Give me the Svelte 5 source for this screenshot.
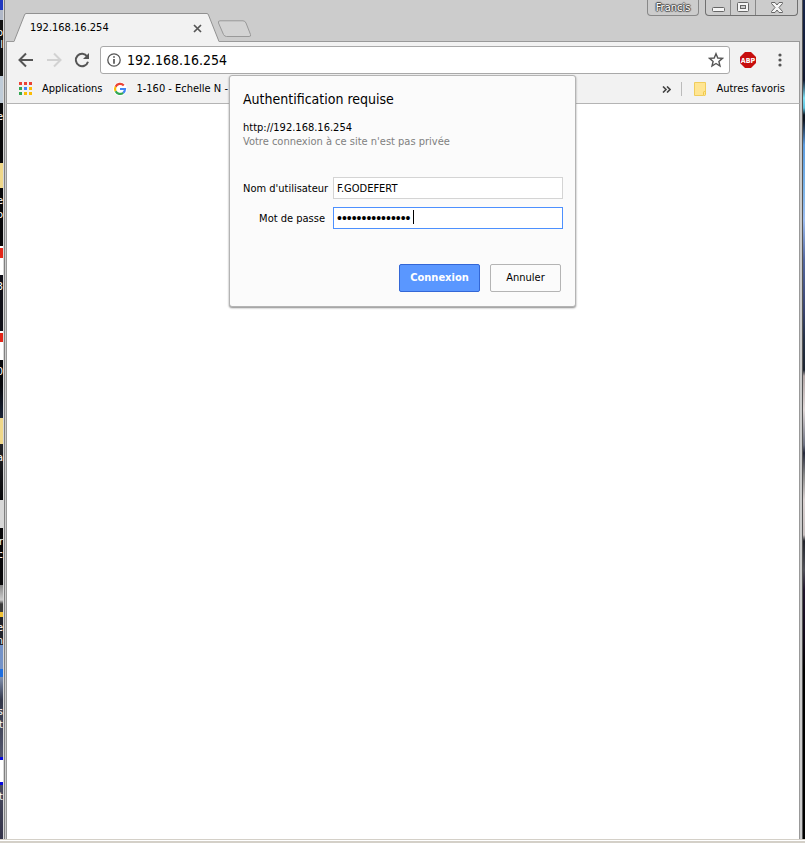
<script lang="ts">
  let username: string = $state('F.GODEFERT');
  let password: string = $state('motdepasse12345');

  const appColors = [
    '#ea4335', '#ea4335', '#ea4335',
    '#34a853', '#4285f4', '#fbbc05',
    '#34a853', '#fbbc05', '#fbbc05'
  ];

  // desktop icon captions that stick out beside the window
  const captions = [
    { text: 'o', top: 26 },
    { text: 'l', top: 38 },
    { text: 'e', top: 110 },
    { text: 'e', top: 194 },
    { text: 'o', top: 208 },
    { text: '3', top: 280 },
    { text: '0', top: 365 },
    { text: 'a', top: 451 },
    { text: 'r', top: 535 },
    { text: 'c', top: 548 },
    { text: 'e', top: 621 },
    { text: 'n', top: 634 },
    { text: 's', top: 705 },
    { text: 't', top: 718 },
    { text: 't', top: 790 }
  ];

  function cancel(): void {
    username = '';
    password = '';
  }
</script>

<div class="screen">
  <div class="desktop">
    <div class="strip left">
      {#each captions as caption}
        <span class="caption" style="top: {caption.top}px">{caption.text}</span>
      {/each}
    </div>

    <div class="window">
      <header class="titlebar">
        <div class="tab">
          <svg class="slope" width="12" height="29" viewBox="0 0 12 29">
            <path d="M0 29V28.5L10.5 2Q11 .5 12 .5V29Z" fill="#f2f2f2" />
            <path d="M0 28.5L10.5 2Q11 .5 12 .5" fill="none" stroke="#919191" />
          </svg>
          <div class="tab-body">
            <span>192.168.16.254</span>
            <button class="icon" aria-label="Fermer l'onglet">
              <svg width="9" height="9" viewBox="0 0 9 9"><path d="M1 1L8 8M8 1L1 8" stroke="#555" stroke-width="1.7" /></svg>
            </button>
          </div>
          <svg class="slope" width="12" height="29" viewBox="0 0 12 29">
            <path d="M12 29V28.5L1.5 2Q1 .5 0 .5V29Z" fill="#f2f2f2" />
            <path d="M12 28.5L1.5 2Q1 .5 0 .5" fill="none" stroke="#919191" />
          </svg>
        </div>
        <button class="icon new-tab" aria-label="Nouvel onglet">
          <svg width="36" height="18" viewBox="0 0 36 18">
            <path d="M3 .8H26Q28 .8 29 3L33.5 14.5Q34.300 16.500 32 16.500H9.500Q7.500 16.500 6.500 14.500L1.500 3Q.8 .8 3 .8Z" fill="#d3d3d3" stroke="#999" />
          </svg>
        </button>
        <button class="profile">Francis</button>
        <div class="controls">
          <button class="minimize" aria-label="Réduire">
            <svg width="13" height="6" viewBox="0 0 13 6"><rect x=".5" y=".5" width="12" height="4" rx="1" fill="#f5f5f5" stroke="#666" /></svg>
          </button>
          <button aria-label="Agrandir">
            <svg width="12" height="10" viewBox="0 0 12 10"><rect x=".5" y=".5" width="11" height="9" rx="1" fill="#f5f5f5" stroke="#666" /><rect x="3.500" y="3.500" width="5" height="3" fill="#ccc" stroke="#666" /></svg>
          </button>
          <button class="close" aria-label="Fermer">
            <svg width="12" height="11" viewBox="0 0 12 11"><path d="M.5 .5H4L6 3L8 .5H11.500V1.500L8 5.500L11.500 9.500V10.500H8L6 8L4 10.500H.5V9.500L4 5.500L.5 1.500Z" fill="#f5f5f5" stroke="#666" /></svg>
          </button>
        </div>
      </header>

      <div class="chrome">
        <nav class="toolbar" aria-label="Navigation">
          <button class="icon" aria-label="Retour">
            <svg width="16" height="16" viewBox="0 0 16 16"><path d="M15 8H2M8 1.500L1.500 8L8 14.500" fill="none" stroke="#555" stroke-width="2" /></svg>
          </button>
          <button class="icon" aria-label="Avancer" disabled>
            <svg width="16" height="16" viewBox="0 0 16 16"><path d="M1 8H14M8 1.500L14.500 8L8 14.500" fill="none" stroke="#d2d2d2" stroke-width="2" /></svg>
          </button>
          <button class="icon" aria-label="Actualiser">
            <svg width="16" height="16" viewBox="0 0 16 16"><path d="M13.200 4.500A6.200 6.200 0 1 0 14 9.700" fill="none" stroke="#555" stroke-width="2" /><path d="M15 1V7H9Z" fill="#555" /></svg>
          </button>
          <div class="address">
            <svg width="14" height="14" viewBox="0 0 14 14"><circle cx="7" cy="7" r="6.200" fill="none" stroke="#555" stroke-width="1.300" /><path d="M7 3.200V4.800M7 6V10.800" stroke="#555" stroke-width="1.700" /></svg>
            <input type="text" aria-label="Adresse" value="192.168.16.254" />
            <button class="icon" aria-label="Ajouter aux favoris">
              <svg width="16" height="16" viewBox="0 0 16 16"><path d="M8 1.700L9.800 6L14.400 6.400L10.900 9.400L12 14L8 11.500L4 14L5.100 9.400L1.600 6.400L6.200 6Z" fill="none" stroke="#555" stroke-width="1.400" /></svg>
            </button>
          </div>
          <button class="icon abp" aria-label="Adblock Plus">
            <svg width="16" height="16" viewBox="0 0 16 16">
              <path d="M5 0H11L16 5V11L11 16H5L0 11V5Z" fill="#c70d0d" />
              <text x="8" y="10.500" text-anchor="middle">ABP</text>
            </svg>
          </button>
          <button class="icon menu" aria-label="Menu">
            <svg width="4" height="14" viewBox="0 0 4 14"><circle cx="2" cy="2" r="1.600" fill="#555" /><circle cx="2" cy="7" r="1.600" fill="#555" /><circle cx="2" cy="12" r="1.600" fill="#555" /></svg>
          </button>
        </nav>

        <nav class="bookmarks" aria-label="Favoris">
          <a href="#apps">
            <svg width="14" height="14" viewBox="0 0 14 14">
              {#each appColors as color, i}
                <rect x={(i % 3) * 5} y={Math.floor(i / 3) * 5} width="3" height="3" fill={color} />
              {/each}
            </svg>
            Applications
          </a>
          <a href="#echelle">
            <svg width="14" height="14" viewBox="0 0 14 14">
              <circle cx="7" cy="7" r="7" fill="#fff" />
              <g fill="none" stroke-width="2.200">
                <path d="M10.800 3.400A5 5 0 0 0 2.600 4.700" stroke="#ea4335" />
                <path d="M2.600 4.700A5 5 0 0 0 2.600 9.300" stroke="#fbbc05" />
                <path d="M2.600 9.300A5 5 0 0 0 10.200 10.800" stroke="#34a853" />
                <path d="M10.200 10.800A5 5 0 0 0 12 7H7" stroke="#4285f4" />
              </g>
            </svg>
            1-160 - Echelle N -
          </a>
          <button class="icon more" aria-label="Autres éléments">
            <svg width="9" height="7" viewBox="0 0 9 7"><path d="M1 .5L4 3.500L1 6.500M5 .5L8 3.500L5 6.500" fill="none" stroke="#444" stroke-width="1.600" /></svg>
          </button>
          <a href="#autres" class="others">
            <svg width="13" height="14" viewBox="0 0 13 14"><path d="M.5 .5H11.500V10.500H9.500V13.500H.5Z" fill="#ffe592" stroke="#f0cd5c" /><rect x="9.500" y="9.500" width="2" height="4" rx="1" fill="#ffe592" stroke="#efc846" /></svg>
            Autres favoris
          </a>
        </nav>
      </div>

      <main class="page"></main>

      <div class="overlay">
        <form class="dialog" onsubmit={(e) => e.preventDefault()}>
          <h1>Authentification requise</h1>
          <p>http://192.168.16.254</p>
          <p class="warning">Votre connexion à ce site n'est pas privée</p>
          <div class="fields">
            <label for="username">Nom d'utilisateur</label>
            <input id="username" type="text" bind:value={username} />
            <label for="password">Mot de passe</label>
            <div class="password">
              <input id="password" type="password" bind:value={password} />
              <i class="caret"></i>
            </div>
          </div>
          <div class="actions">
            <button class="primary" type="submit">Connexion</button>
            <button type="button" onclick={cancel}>Annuler</button>
          </div>
        </form>
      </div>
    </div>

    <div class="strip right"></div>
  </div>
  <div class="taskbar"></div>
</div>

<style>
  :global(body) {
    margin: 0;
  }
  .screen {
    display: flex;
    flex-direction: column;
    min-height: 100vh;
    font-family: 'DejaVu Sans Condensed', 'Noto Sans', Tahoma, sans-serif;
    font-size: 11px;
    line-height: 14px;
    color: #000;
  }
  button,
  input {
    font: inherit;
    color: inherit;
    box-sizing: border-box;
    margin: 0;
    outline: none;
  }
  svg {
    display: block;
    flex: none;
  }
  .icon {
    padding: 0;
    border: 0;
    background: none;
  }

  /* desktop behind the window */
  .desktop {
    flex: 1;
    display: flex;
  }
  .strip {
    position: relative;
    overflow: hidden;
  }
  .left {
    width: 3px;
    background: linear-gradient(
      #2038c0 0 10px, #b0b8c8 10px 20px, #111 20px 76px, #c0ccd8 76px 103px,
      #08080a 103px 163px, #f0d88a 163px 188px, #08080a 188px 246px,
      #fff 246px 248px, #e32619 248px 258px, #fff 258px 275px, #101018 275px 331px,
      #fff 331px 333px, #e32619 333px 342px, #fff 342px 360px, #08080c 360px 385px,
      #1a2438 418px, #f0d88a 418px 444px, #26262a 444px, #08080a 500px,
      #d8d8d8 500px 528px, #08080a 528px 585px, #888 585px, #ccc 600px,
      #3a3a3a 604px 612px, #f2c335 612px 617px, #22242c 617px 645px,
      #7593c8 645px 669px, #1f6fe0 669px 677px, #8292b0 677px, #34384a 700px,
      #55586e 757px, #0808e0 757px 760px, #fff 760px 782px, #0808e0 782px 785px,
      #4a4c60 785px, #34344a
    );
  }
  .right {
    width: 2px;
    background: linear-gradient(
      #18264a, #101830 80px, #7fe0f4 98px, #5cc0dc 108px, #0c1420 115px,
      #0c1420 120px, #5c9ce0 145px, #7cb4e8 190px, #9cbcf0 220px, #5468a0 260px,
      #3a4470 310px, #243044 340px, #1c2430 370px, #b4a8a8 376px, #e0d8d8 410px,
      #6c7080 445px, #24283a 453px, #888 475px, #dcd4d4 500px, #c8c0c0 535px,
      #20222a 541px, #505058 570px, #20142c 590px, #100818 640px, #000 670px
    );
  }
  .caption {
    position: absolute;
    right: 0;
    color: #fff;
  }
  .taskbar {
    height: 1px;
    border-top: 1px solid #d4d0c8;
    border-bottom: 2px solid #d4d0c8;
    background: #fff;
  }

  .window {
    position: relative;
    flex: 1;
    min-width: 0;
    display: flex;
    flex-direction: column;
    border-left: 1px solid #d8d8d8;
    border-right: 1px solid #555;
    background: #ccc;
    box-shadow: inset 1px 0 #808080;
  }
  .titlebar {
    display: flex;
    align-items: flex-start;
    padding: 0 4px 0 10px;
    height: 41px;
  }
  .tab {
    display: flex;
    align-self: flex-end;
    position: relative;
    z-index: 1;
    margin-bottom: -1px;
  }
  .tab-body {
    display: flex;
    align-items: center;
    justify-content: space-between;
    box-sizing: border-box;
    width: 181px;
    height: 29px;
    padding: 0 5px 0 4px;
    border-top: 1px solid #919191;
    background: #f2f2f2;
  }
  .new-tab {
    align-self: flex-end;
    margin: 0 auto 3px -2px;
  }
  .profile,
  .controls {
    height: 16px;
    border: 1px solid #888;
    border-top: 0;
    border-radius: 0 0 4px 4px;
    background: #ccc;
    box-sizing: border-box;
  }
  .profile {
    width: 52px;
    padding: 0;
    margin-right: 6px;
    color: #fff;
    text-shadow: 1px 0 1px #444, -1px 0 1px #444, 0 1px 1px #444, 0 -1px 1px #444;
  }
  .controls {
    display: flex;
    border-color: #707070;
  }
  .controls button {
    display: flex;
    align-items: center;
    justify-content: center;
    width: 25px;
    padding: 0 0 1px;
    border: 0;
    border-right: 1px solid #888;
    background: none;
  }
  .controls .minimize {
    align-items: flex-end;
    padding-bottom: 2px;
  }
  .controls .close {
    width: 41px;
    border: 0;
  }

  .chrome {
    margin: 0 2px;
    border: 1px solid #999;
    border-bottom-color: #b4b4b4;
    background: #f2f2f2;
  }
  .toolbar {
    display: flex;
    align-items: center;
    gap: 12px;
    padding: 4px 17px 0 11px;
  }
  .address {
    flex: 1;
    display: flex;
    align-items: center;
    gap: 6px;
    height: 28px;
    box-sizing: border-box;
    margin-left: -2px;
    padding: 0 5px 0 6px;
    border: 1px solid #a9a9a9;
    border-radius: 3px;
    background: #fff;
  }
  .address input {
    flex: 1;
    min-width: 0;
    padding: 0;
    border: 0;
    background: none;
    font-size: 14px;
    line-height: 20px;
  }
  .abp {
    margin-left: -2px;
  }
  .abp text {
    fill: #fff;
    font-size: 7px;
    font-weight: bold;
  }
  .menu {
    margin: 0 0 0 10px;
  }
  .bookmarks {
    display: flex;
    align-items: center;
    box-sizing: border-box;
    height: 29px;
    padding: 1px 14px 0 12px;
  }
  .bookmarks a {
    display: flex;
    align-items: center;
    gap: 9px;
    margin-right: 11px;
    color: #000;
    text-decoration: none;
    white-space: nowrap;
  }
  .bookmarks .more {
    margin: 0 10px 0 auto;
  }
  .bookmarks .others {
    margin: 0;
    padding-left: 12px;
    border-left: 1px solid #bbb;
  }

  .page {
    flex: 1;
    margin: 0 2px;
    border: solid #999;
    border-width: 0 1px;
    background: #fff;
  }

  /* login prompt drawn over the page */
  .overlay {
    position: absolute;
    top: 75px;
    left: 0;
    right: 0;
    display: flex;
    justify-content: center;
    padding-right: 1px;
  }
  .dialog {
    box-sizing: border-box;
    width: 347px;
    padding: 13px 12px 14px 13px;
    border: 1px solid #b4b4b4;
    border-radius: 3px;
    background: #fbfbfb;
    box-shadow: 0 1px 2px #888;
  }
  h1 {
    margin: 0 0 12px;
    font-size: 14px;
    line-height: 20px;
    font-weight: normal;
  }
  p {
    margin: 0;
  }
  .warning {
    color: #808080;
  }
  .fields {
    display: grid;
    grid-template-columns: 82px 1fr;
    gap: 8px;
    align-items: center;
    margin-top: 28px;
  }
  .fields label {
    padding-top: 2px;
    text-align: right;
    white-space: nowrap;
  }
  .fields input {
    width: 100%;
    height: 22px;
    padding: 0 3px;
    border: 1px solid #d4d4d4;
    background: #fff;
  }
  .password {
    position: relative;
    display: flex;
  }
  .fields .password input {
    border-color: #4d90fe;
    font-family: 'Liberation Sans', Arial, sans-serif;
    font-size: 14px;
  }
  .caret {
    position: absolute;
    top: 3px;
    left: 80px;
    width: 1px;
    height: 14px;
    background: #000;
  }
  .actions {
    display: flex;
    justify-content: flex-end;
    gap: 10px;
    margin: 35px 2px 0 0;
  }
  .actions button {
    width: 71px;
    height: 28px;
    padding: 0;
    border: 1px solid #b4b4b4;
    border-radius: 2px;
    background: #fbfbfb;
  }
  .actions .primary {
    width: 81px;
    border-color: #3367d6;
    background: #5a97ff;
    color: #fff;
    font-weight: bold;
  }
</style>
